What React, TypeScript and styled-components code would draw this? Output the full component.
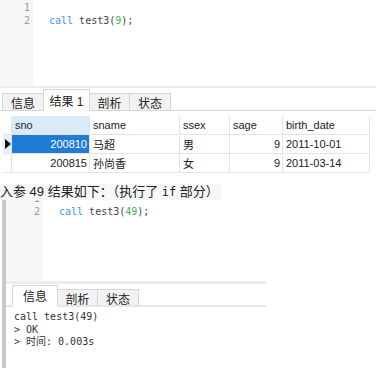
import React from "react";
import styled, { createGlobalStyle } from "styled-components";

const Global = createGlobalStyle`
  html, body { margin: 0; padding: 0; background: #fff; }
  body { width: 376px; height: 368px; overflow: hidden; }
  * { box-sizing: border-box; }
`;

const MONO = `"DejaVu Sans Mono", "Liberation Mono", "Noto Sans CJK SC", monospace`;
const SANS = `"Liberation Sans", "Noto Sans CJK SC", sans-serif`;

const Page = styled.div`
  width: 376px;
  height: 368px;
  display: flex;
  flex-direction: column;
  overflow: hidden;
  background: #fff;
`;

const Editor = styled.div<{ $h: number; $gutter: number; $border?: boolean }>`
  height: ${(p) => p.$h}px;
  display: grid;
  grid-template-columns: ${(p) => p.$gutter}px 1fr;
  overflow: hidden;
  flex-shrink: 0;
  border-bottom: ${(p) => (p.$border ? "2px solid #ececec" : "none")};
`;

const Gutter = styled.div<{ $offset: number }>`
  background: #f7f7f7;
  padding-right: 3px;
  text-align: right;
  font: 10px/13px ${MONO};
  color: #9a9a9a;
  overflow: hidden;
  & > div:first-child {
    margin-top: ${(p) => p.$offset}px;
  }
`;

const Code = styled.div<{ $offset: number }>`
  padding-top: ${(p) => p.$offset}px;
  padding-left: 16px;
  font: 10px/13px ${MONO};
  color: #444;
  white-space: pre;
`;

const Kw = styled.span`
  color: #3f93e3;
`;
const Num = styled.span`
  color: #3cb35b;
`;

const TabBar = styled.div<{ $pad: number; $h: number; $bw: number }>`
  height: ${(p) => p.$h}px;
  display: flex;
  align-items: flex-end;
  padding-left: ${(p) => p.$pad}px;
  border-bottom: ${(p) => p.$bw}px solid ${(p) => (p.$bw > 1 ? "#e6e6e6" : "#d6d6d6")};
  flex-shrink: 0;
`;

const Tab = styled.div<{ $w: number; $active?: boolean; $bw: number }>`
  width: ${(p) => p.$w}px;
  height: ${(p) => (p.$active ? 22 : 18)}px;
  margin-bottom: -${(p) => p.$bw}px;
  margin-right: -1px;
  display: flex;
  align-items: center;
  justify-content: center;
  font: 12px ${SANS};
  color: #222;
  background: ${(p) => (p.$active ? "#fff" : "#f2f2f2")};
  border: 1px solid #d6d6d6;
  border-bottom: ${(p) => p.$bw}px solid ${(p) => (p.$active ? "#fff" : p.$bw > 1 ? "#e6e6e6" : "#d6d6d6")};
  padding-top: ${(p) => (p.$active ? 0 : 1)}px;
  position: relative;
  z-index: ${(p) => (p.$active ? 1 : 0)};
`;

const Grid = styled.div`
  margin: 5px 0 0 3px;
  display: grid;
  grid-template-columns: 9px 78px 90px 50px 53px 87px;
  grid-auto-rows: 19px;
  width: max-content;
  flex-shrink: 0;
`;

type CellKind = "head" | "headSel" | "ind" | "indSel" | "sel" | "plain";

const Cell = styled.div<{ $kind: CellKind; $right?: boolean }>`
  display: flex;
  align-items: center;
  justify-content: ${(p) => (p.$right ? "flex-end" : "flex-start")};
  padding: 0 2px 0 3px;
  font: 11px ${SANS};
  white-space: nowrap;
  overflow: hidden;
  color: ${(p) => (p.$kind === "sel" ? "#fff" : "#222")};
  background: ${(p) =>
    p.$kind === "sel"
      ? "#1f7bd5"
      : p.$kind === "headSel"
      ? "#d9ebf9"
      : p.$kind === "indSel"
      ? "#e3f0fb"
      : "#fff"};
  border-right: 1px solid #e4e4e4;
  border-bottom: 1px solid #e4e4e4;
`;

const Indicator = styled.span`
  width: 0;
  height: 0;
  margin-left: -1px;
  border-top: 5px solid transparent;
  border-bottom: 5px solid transparent;
  border-left: 6px solid #111;
`;

const Caption = styled.div`
  margin-top: 11px;
  width: 221px;
  height: 16px;
  background: #f7f7f7;
  font: 13px/16px ${SANS};
  color: #222;
  white-space: pre;
  flex-shrink: 0;
`;

const CapMono = styled.span`
  font-family: ${MONO};
  font-size: 12px;
`;

const Shot = styled.div`
  flex: 1;
  display: flex;
  padding-left: 2px;
`;

const SideBar = styled.div`
  width: 4px;
  background: #c9c9c9;
  flex-shrink: 0;
`;

const Panel = styled.div`
  width: 260px;
  display: flex;
  flex-direction: column;
`;

const Divider = styled.div`
  height: 3px;
  background: #ececec;
  flex-shrink: 0;
`;

const Output = styled.div`
  padding: 4px 0 0 8px;
  font: 10px/12.5px ${MONO};
  color: #333;
  white-space: pre;
`;

const columns = ["sno", "sname", "ssex", "sage", "birth_date"];
const rows = [
  { sno: "200810", sname: "马超", ssex: "男", sage: "9", birth: "2011-10-01" },
  { sno: "200815", sname: "孙尚香", ssex: "女", sage: "9", birth: "2011-03-14" },
];

export default function App() {
  return (
    <Page>
      <Global />
      <Editor $h={88} $gutter={33} $border>
        <Gutter $offset={1}>
          <div>1</div>
          <div>2</div>
        </Gutter>
        <Code $offset={14}>
          <Kw>call</Kw> test3(<Num>9</Num>);
        </Code>
      </Editor>
      <TabBar $pad={2} $h={23} $bw={1}>
        <Tab $w={42} $bw={1}>信息</Tab>
        <Tab $w={47} $bw={1} $active>结果 1</Tab>
        <Tab $w={41} $bw={1}>剖析</Tab>
        <Tab $w={42} $bw={1}>状态</Tab>
      </TabBar>
      <Grid>
        <Cell $kind="head" />
        {columns.map((c, i) => (
          <Cell key={c} $kind={i === 0 ? "headSel" : "head"}>
            {c}
          </Cell>
        ))}
        {rows.map((r, i) => (
          <React.Fragment key={r.sno}>
            <Cell $kind={i === 0 ? "indSel" : "ind"}>{i === 0 && <Indicator />}</Cell>
            <Cell $kind={i === 0 ? "sel" : "plain"} $right>
              {r.sno}
            </Cell>
            <Cell $kind="plain">{r.sname}</Cell>
            <Cell $kind="plain">{r.ssex}</Cell>
            <Cell $kind="plain" $right>
              {r.sage}
            </Cell>
            <Cell $kind="plain">{r.birth}</Cell>
          </React.Fragment>
        ))}
      </Grid>
      <Caption>
        入参 49 结果如下：（执行了 <CapMono>if</CapMono> 部分）
      </Caption>
      <Shot>
        <SideBar />
        <Panel>
          <Editor $h={81} $gutter={37}>
            <Gutter $offset={-8}>
              <div>1</div>
              <div>2</div>
            </Gutter>
            <Code $offset={5}>
              <Kw>call</Kw> test3(<Num>49</Num>);
            </Code>
          </Editor>
          <Divider />
          <TabBar $pad={6} $h={23} $bw={2}>
            <Tab $w={46} $bw={2} $active>信息</Tab>
            <Tab $w={41} $bw={2}>剖析</Tab>
            <Tab $w={42} $bw={2}>状态</Tab>
          </TabBar>
          <Output>
            {"call test3(49)\n> OK\n> 时间: 0.003s"}
          </Output>
        </Panel>
      </Shot>
    </Page>
  );
}
